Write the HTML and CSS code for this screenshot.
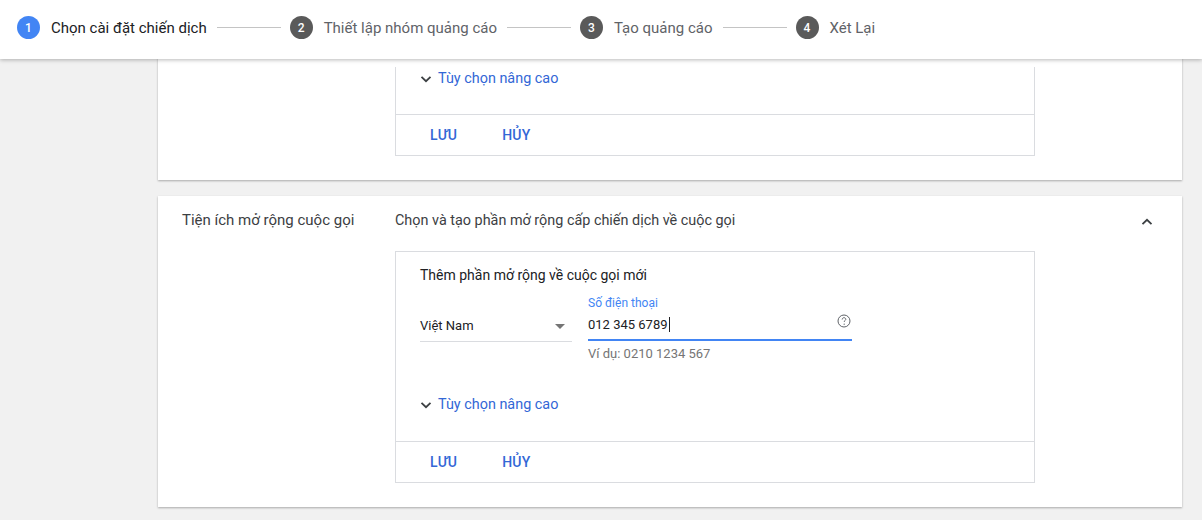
FILE: index.html
```html
<!DOCTYPE html>
<html lang="vi">
<head>
<meta charset="utf-8">
<title>Chiến dịch</title>
<link rel="stylesheet" href="styles.css">
</head>
<body>
<header class="stepper">
  <div class="step active"><span class="num">1</span><span class="label">Chọn cài đặt chiến dịch</span></div>
  <span class="connector"></span>
  <div class="step"><span class="num">2</span><span class="label">Thiết lập nhóm quảng cáo</span></div>
  <span class="connector"></span>
  <div class="step"><span class="num">3</span><span class="label">Tạo quảng cáo</span></div>
  <span class="connector"></span>
  <div class="step"><span class="num">4</span><span class="label">Xét Lại</span></div>
</header>

<main class="content">
  <section class="card card-top">
    <div class="card-left"></div>
    <div class="card-body">
      <div class="ext-box ext-box-cut">
        <div class="advanced advanced-top">
          <svg class="chev" viewBox="0 0 12 12" width="12" height="12"><path d="M1.5 3.8 6 8.2 10.5 3.8" fill="none" stroke="#3c4043" stroke-width="1.8"/></svg>
          <span>Tùy chọn nâng cao</span>
        </div>
        <div class="actions">
          <span class="btn">LƯU</span>
          <span class="btn">HỦY</span>
        </div>
      </div>
    </div>
  </section>

  <section class="card card-call">
    <div class="card-left"><span class="section-title">Tiện ích mở rộng cuộc gọi</span></div>
    <div class="card-body">
      <div class="card-head">
        <span class="section-desc">Chọn và tạo phần mở rộng cấp chiến dịch về cuộc gọi</span>
        <svg class="chev-up" viewBox="0 0 12 12" width="12" height="12"><path d="M1.5 8.2 6 3.8 10.5 8.2" fill="none" stroke="#3c4043" stroke-width="1.8"/></svg>
      </div>
      <div class="ext-box">
        <div class="box-title">Thêm phần mở rộng về cuộc gọi mới</div>
        <div class="fields">
          <div class="select">
            <span>Việt Nam</span>
            <span class="tri"></span>
          </div>
          <div class="phone">
            <div class="phone-label">Số điện thoại</div>
            <div class="phone-input">
              <span class="value">012 345 6789<span class="caret"></span></span>
              <svg class="help" viewBox="0 0 14 14" width="14" height="14">
                <circle cx="7" cy="7" r="6" fill="none" stroke="#5f6368" stroke-width="1"/>
                <path d="M5.2 5.5c0-1.1.8-1.8 1.8-1.8s1.8.7 1.8 1.6c0 1.2-1.6 1.3-1.6 2.6" fill="none" stroke="#5f6368" stroke-width="1"/>
                <circle cx="7.2" cy="10.2" r=".65" fill="#5f6368"/>
              </svg>
            </div>
            <div class="hint">Ví dụ: 0210 1234 567</div>
          </div>
        </div>
        <div class="advanced">
          <svg class="chev" viewBox="0 0 12 12" width="12" height="12"><path d="M1.5 3.8 6 8.2 10.5 3.8" fill="none" stroke="#3c4043" stroke-width="1.8"/></svg>
          <span>Tùy chọn nâng cao</span>
        </div>
        <div class="actions">
          <span class="btn">LƯU</span>
          <span class="btn">HỦY</span>
        </div>
      </div>
    </div>
  </section>
</main>
</body>
</html>
```

FILE: styles.css
```css
* { box-sizing: border-box; }

html, body {
  margin: 0;
  padding: 0;
}

body {
  background: #f1f1f1;
  font-family: Roboto, "Noto Sans", "Liberation Sans", sans-serif;
  color: #3c4043;
  width: 1202px;
  height: 520px;
  overflow: hidden;
}

/* ---------- stepper ---------- */
.stepper {
  position: relative;
  z-index: 2;
  height: 59px;
  background: #fff;
  box-shadow: 0 1px 4px rgba(0, 0, 0, 0.28);
  display: flex;
  align-items: center;
  padding: 0 0 4px 17px;
}

.step {
  display: flex;
  align-items: center;
  gap: 11px;
}

.num {
  width: 23px;
  height: 23px;
  border-radius: 50%;
  background: #5a5a5a;
  color: #fff;
  font-size: 12px;
  font-weight: 500;
  display: flex;
  align-items: center;
  justify-content: center;
}

.step.active .num { background: #4285f4; }

.label {
  font-size: 15px;
  color: #5f6368;
  white-space: nowrap;
}

.step.active .label { color: #202124; }

.connector {
  width: 64px;
  height: 1px;
  background: #c4c4c4;
  margin: 0 9px 0 10px;
}

/* ---------- cards ---------- */
.content {
  padding: 0 20px 0 158px;
}

.card {
  background: #fff;
  box-shadow: 0 1px 2px rgba(0, 0, 0, 0.3);
  display: flex;
}

.card-left {
  width: 237px;
  flex: none;
  padding-left: 24px;
}

.card-body {
  flex: 1;
}

.card-top {
  margin-top: -2px;
  padding-bottom: 24px;
}

.card-call {
  margin-top: 16px;
  padding-top: 13px;
  height: 311px;
}

.section-title {
  display: block;
  font-size: 15px;
  line-height: 22px;
  color: #3c4043;
}

.card-head {
  display: flex;
  align-items: center;
  justify-content: space-between;
  padding-right: 29px;
  height: 22px;
  margin-bottom: 20px;
}

.section-desc {
  font-size: 14.4px;
  color: #3c4043;
}

.chev-up { margin-top: 4px; }

/* ---------- extension box ---------- */
.ext-box {
  width: 640px;
  border: 1px solid #dadce0;
}

.ext-box-cut { border-top: none; }

.box-title {
  padding: 12px 0 0 24px;
  font-size: 14px;
  line-height: 22px;
  color: #202124;
}

.advanced {
  display: flex;
  align-items: center;
  gap: 6px;
  padding-left: 24px;
  height: 22px;
  font-size: 14.4px;
  color: #3367d6;
  margin: 31px 0 26px;
}

.advanced-top {
  margin: 10px 0 25px;
}

.chev { flex: none; margin-top: 1px; }

.actions {
  border-top: 1px solid #dadce0;
  height: 41px;
  display: flex;
  align-items: center;
  padding-left: 34px;
  gap: 45px;
}

.btn {
  font-size: 14px;
  font-weight: 500;
  color: #3367d6;
  letter-spacing: 0.2px;
}

/* ---------- fields ---------- */
.fields {
  display: flex;
  gap: 16px;
  padding-left: 24px;
  margin-top: 9px;
}

.select {
  width: 152px;
  margin-top: 17px;
  height: 30px;
  padding-bottom: 2px;
  border-bottom: 1px solid #dadce0;
  display: flex;
  align-items: center;
  justify-content: space-between;
  padding-right: 7px;
  font-size: 13px;
  color: #202124;
  align-self: flex-start;
}

.tri {
  width: 0;
  height: 0;
  border-left: 5px solid transparent;
  border-right: 5px solid transparent;
  border-top: 5px solid #757575;
  margin-top: 1px;
}

.phone {
  width: 264px;
}

.phone-label {
  font-size: 12px;
  line-height: 16px;
  color: #4285f4;
}

.phone-input {
  height: 30px;
  border-bottom: 2px solid #4285f4;
  display: flex;
  align-items: center;
  justify-content: space-between;
  font-size: 13px;
  color: #202124;
  padding-bottom: 2px;
}

.value { display: flex; align-items: center; }

.caret {
  display: inline-block;
  width: 1px;
  height: 15px;
  background: #202124;
  margin-left: 1px;
}

.help { margin-right: 1px; margin-top: -6px; }

.hint {
  font-size: 13px;
  color: #757575;
  margin-top: 4px;
  line-height: 17px;
}
```
